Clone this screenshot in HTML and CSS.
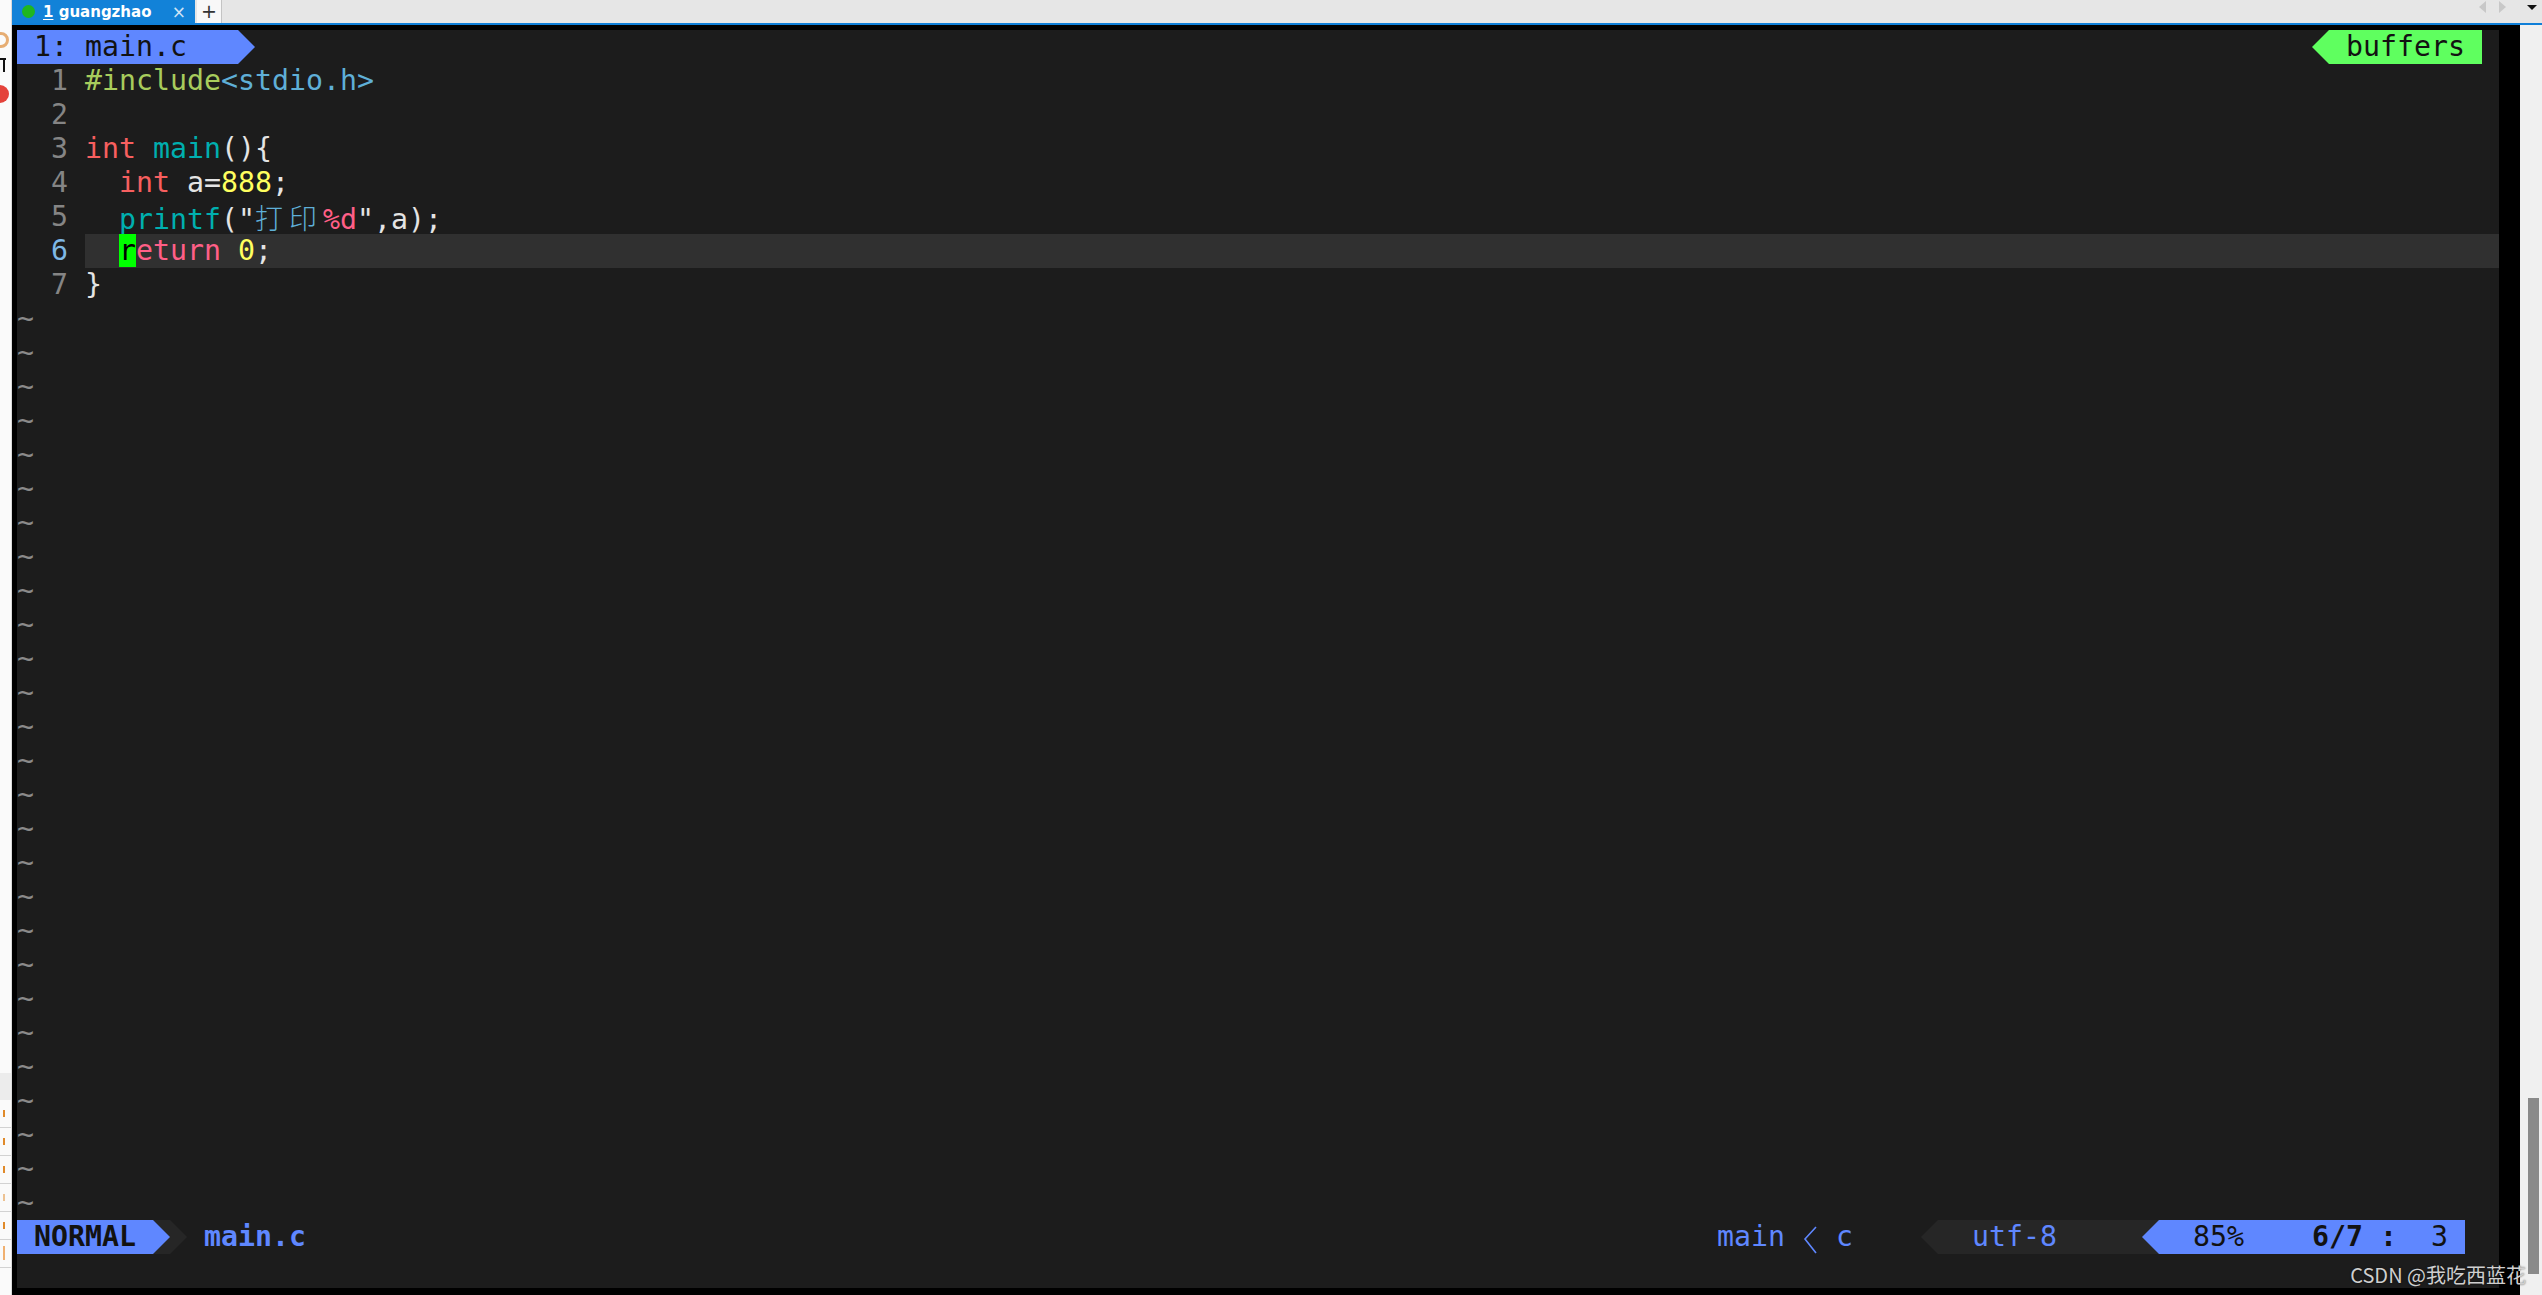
FILE: index.html
```html
<!DOCTYPE html>
<html lang="zh-CN">
<head>
<meta charset="UTF-8" />
<meta name="viewport" content="width=device-width, initial-scale=1.0"/>
<link rel="stylesheet" href="styles.css">
</head>
<body>

<div class="window">

  <!-- barra lateral de la app -->
  <aside class="side">
    <div class="side__find"></div>
    <div class="side__text"></div>
    <div class="side__logo"></div>
    <div class="side__spacer"></div>
    <div class="side__band"></div>
    <div class="side__cell"><i></i></div>
    <div class="side__cell"><i></i></div>
    <div class="side__cell"><i></i></div>
    <div class="side__cell"><i class="faint"></i></div>
    <div class="side__cell"><i></i></div>
    <div class="side__cell"><i class="long"></i></div>
    <div class="side__cell side__cell--last"></div>
  </aside>

  <div class="main">
    <div class="tabbar">
      <div class="tab">
        <span class="tab__dot"></span>
        <span class="tab__title"><u>1</u> guangzhao</span>
        <span class="tab__close">×</span>
      </div>
      <div class="tab-add">+</div>
      <div class="tabbar__nav">
        <span class="nav-prev"></span>
        <span class="nav-next"></span>
        <span class="nav-menu"></span>
      </div>
    </div>

    <div class="body">
      <div class="term">
        <div class="vim">

          <!-- tabline -->
          <div class="row">
            <span class="seg seg--tab"> 1: main.c</span>
            <span class="tri tri--r tri--blue"></span>
            <span class="fill"></span>
            <span class="tri tri--l tri--green"></span>
            <span class="seg seg--buffers"> buffers</span>
            <span class="seg seg--one"></span>
          </div>

          <!-- codigo -->
          <div class="row"><span class="nr">  1 </span><span class="code"><span class="c-pre">#include</span><span class="c-inc">&lt;stdio.h&gt;</span></span></div>
          <div class="row"><span class="nr">  2 </span><span class="code"></span></div>
          <div class="row"><span class="nr">  3 </span><span class="code"><span class="c-type">int</span> <span class="c-fn">main</span>(){</span></div>
          <div class="row"><span class="nr">  4 </span><span class="code">  <span class="c-type">int</span> a=<span class="c-num">888</span>;</span></div>
          <div class="row"><span class="nr">  5 </span><span class="code">  <span class="c-fn">printf</span>("<span class="c-str wide">打</span><span class="c-str wide">印</span><span class="c-fmt">%d</span>",a);</span></div>
          <div class="row"><span class="nr nr--cur">  6 </span><span class="code code--cur">  <span class="cursor">r</span><span class="c-kw">eturn</span> <span class="c-num">0</span>;</span></div>
          <div class="row"><span class="nr">  7 </span><span class="code">}</span></div>

          <!-- filas vacias -->
          <div class="row"><span class="tilde">~</span></div>
          <div class="row"><span class="tilde">~</span></div>
          <div class="row"><span class="tilde">~</span></div>
          <div class="row"><span class="tilde">~</span></div>
          <div class="row"><span class="tilde">~</span></div>
          <div class="row"><span class="tilde">~</span></div>
          <div class="row"><span class="tilde">~</span></div>
          <div class="row"><span class="tilde">~</span></div>
          <div class="row"><span class="tilde">~</span></div>
          <div class="row"><span class="tilde">~</span></div>
          <div class="row"><span class="tilde">~</span></div>
          <div class="row"><span class="tilde">~</span></div>
          <div class="row"><span class="tilde">~</span></div>
          <div class="row"><span class="tilde">~</span></div>
          <div class="row"><span class="tilde">~</span></div>
          <div class="row"><span class="tilde">~</span></div>
          <div class="row"><span class="tilde">~</span></div>
          <div class="row"><span class="tilde">~</span></div>
          <div class="row"><span class="tilde">~</span></div>
          <div class="row"><span class="tilde">~</span></div>
          <div class="row"><span class="tilde">~</span></div>
          <div class="row"><span class="tilde">~</span></div>
          <div class="row"><span class="tilde">~</span></div>
          <div class="row"><span class="tilde">~</span></div>
          <div class="row"><span class="tilde">~</span></div>
          <div class="row"><span class="tilde">~</span></div>
          <div class="row"><span class="tilde">~</span></div>

          <!-- statusline -->
          <div class="row">
            <span class="seg seg--mode"> NORMAL</span>
            <span class="cell cell--gray"><span class="tri tri--r tri--blue"></span></span>
            <span class="tri tri--r tri--gray"></span>
            <span class="seg seg--file"> main.c</span>
            <span class="fill"></span>
            <span class="seg seg--ft">main </span>
            <svg class="thin-sep" width="17" height="34" viewBox="0 0 17 34"><polyline points="14,7 3,19 14,33" fill="none" stroke="#5f87ff" stroke-width="1.6"/></svg>
            <span class="seg seg--ft2"> c</span>
            <span class="tri tri--l tri--gray"></span>
            <span class="seg seg--enc">  utf-8</span>
            <span class="cell cell--gray"><span class="tri tri--l tri--blue"></span></span>
            <span class="seg seg--pos">  85%    <b>6/7 :</b>  3</span>
            <span class="seg seg--end"></span>
          </div>

          <!-- linea de comandos -->
          <div class="row"></div>

        </div>
      </div>
      <div class="scroll"><div class="scroll__thumb"></div></div>
    </div>
  </div>
</div>

<div class="watermark">CSDN @我吃西蓝花</div>

</body>
</html>
```

FILE: styles.css
```css
:root {
  --vim-bg: #1c1c1c;
  --cur-line: #303030;
  --blue: #5f87ff;
  --green: #5fff5f;
  --seg-gray: #262626;
  --fg: #e4e4e4;
  --dim: #858585;
  --ink: #121212;
}

body {
  margin: 0;
  background: #f0f0f0;
  font-family: "DejaVu Sans", sans-serif;
}

.window {
  display: flex;
  width: 2542px;
  height: 1295px;
  overflow: hidden;
}

/* Barra lateral */
.side {
  width: 11px;
  border-right: 1px solid #dadada;
  background: #fafafa;
  display: flex;
  flex-direction: column;
  overflow: hidden;
}

.side__find {
  margin-top: 32px;
  margin-left: -7px;
  width: 10px;
  height: 10px;
  border: 3px solid #e6ad73;
  border-radius: 50%;
}

/* trozo de icono "T" */
.side__text {
  margin-top: 10px;
  height: 14px;
  width: 6px;
  border-top: 2px solid #111;
  box-sizing: border-box;
  background: linear-gradient(#111, #111) 3px 0 / 2px 100% no-repeat;
}

.side__logo {
  margin-top: 13px;
  margin-left: -9px;
  width: 18px;
  height: 18px;
  border-radius: 50%;
  background: #e4423a;
}

.side__spacer {
  flex: 1;
}

.side__band {
  height: 27px;
  background: #ececec;
}

.side__cell {
  height: 28px;
  box-sizing: border-box;
  border-bottom: 1px solid #d2d2d2;
}

.side__cell i {
  display: block;
  width: 2px;
  height: 7px;
  margin: 10px 0 0 3px;
  background: #e08a2a;
}

.side__cell i.faint {
  opacity: .5;
}

.side__cell i.long {
  height: 14px;
  margin-top: 6px;
  background: #f0b070;
}

.side__cell--last {
  height: 27px;
  border-bottom: none;
}

/* Pestañas */
.main {
  flex: 1;
  display: flex;
  flex-direction: column;
  min-width: 0;
}

.tabbar {
  height: 23px;
  border-bottom: 2px solid #0f7fd8;
  background: #e6e6e6;
  display: flex;
}

.tab {
  width: 183px;
  background: #1282d8;
  display: flex;
  align-items: center;
  color: #fff;
}

.tab__dot {
  width: 13px;
  height: 13px;
  border-radius: 50%;
  background: #1fb61f;
  margin-left: 10px;
}

.tab__title {
  margin-left: 8px;
  font-weight: bold;
  font-size: 15px;
}

.tab__title u {
  text-underline-offset: 2px;
}

.tab__close {
  margin-left: auto;
  margin-right: 9px;
  color: #cfe3f5;
  font-size: 17px;
}

.tab-add {
  width: 24px;
  margin-left: 2px;
  background: #f8f8f8;
  border-right: 1px solid #c4c4c4;
  text-align: center;
  font-size: 19px;
  line-height: 22px;
  color: #333;
}

.tabbar__nav {
  margin-left: auto;
  display: flex;
  align-items: flex-start;
}

.nav-prev {
  margin-top: 1px;
  border-right: 7px solid #c8c8c8;
  border-top: 6px solid transparent;
  border-bottom: 6px solid transparent;
}

.nav-next {
  margin-top: 1px;
  margin-left: 13px;
  border-left: 7px solid #c8c8c8;
  border-top: 6px solid transparent;
  border-bottom: 6px solid transparent;
}

.nav-menu {
  margin: 5px 5px 0 21px;
  border-top: 5px solid #111;
  border-left: 5px solid transparent;
  border-right: 5px solid transparent;
}

/* Terminal */
.body {
  flex: 1;
  display: flex;
  min-height: 0;
}

.term {
  flex: 1;
  background: #000;
  padding: 5px 21px 7px 5px;
}

.scroll {
  width: 22px;
  background: #f0f0f0;
  display: flex;
  flex-direction: column;
  justify-content: flex-end;
  box-sizing: border-box;
  padding: 0 3px 21px 8px;
}

.scroll__thumb {
  height: 176px;
  background: #8a8a8a;
}

.vim {
  background: var(--vim-bg);
  height: 1258px;
  font-family: "DejaVu Sans Mono", monospace;
  font-size: 28.24px;
  color: var(--fg);
}

.row {
  display: flex;
  height: 34px;
  line-height: 34px;
}

.row > span {
  white-space: pre;
}

.fill {
  flex: 1;
}

.nr {
  flex: 0 0 68px;
  color: var(--dim);
}

.nr--cur {
  color: #7fb8e6;
}

.code {
  flex: 1;
}

.code--cur {
  background: var(--cur-line);
}

.cursor {
  background: #00ff00;
  color: #000;
}

.tilde {
  color: #8a8a8a;
}

.c-pre { color: #a8cc5c; }
.c-inc { color: #5fafd7; }
.c-type { color: #f75f5f; }
.c-fn { color: #00afaf; }
.c-num { color: #ffff5f; }
.c-str { color: #5fafd7; }
.c-fmt { color: #ff5f87; }
.c-kw { color: #ff5f87; }

.wide {
  display: inline-block;
  width: 34px;
  font-family: "Noto Sans CJK SC", sans-serif;
  font-weight: 300;
  font-size: 28px;
}

/* Segmentos de tabline y statusline */
.seg {
  box-sizing: border-box;
}

.seg--tab {
  flex: 0 0 221px;
  background: var(--blue);
  color: var(--ink);
}

.seg--buffers {
  flex: 0 0 153px;
  background: var(--green);
  color: var(--ink);
}

.seg--one {
  flex: 0 0 17px;
}

.seg--mode {
  flex: 0 0 136px;
  background: var(--blue);
  color: var(--ink);
  font-weight: bold;
}

.seg--file {
  flex: 0 0 119px;
  color: var(--blue);
  font-weight: bold;
}

.seg--ft {
  flex: 0 0 85px;
  color: var(--blue);
}

.seg--ft2 {
  flex: 0 0 102px;
  color: var(--blue);
}

.thin-sep {
  flex: 0 0 17px;
}

.seg--enc {
  flex: 0 0 204px;
  background: var(--seg-gray);
  color: var(--blue);
}

.seg--pos {
  flex: 0 0 306px;
  background: var(--blue);
  color: var(--ink);
}

.seg--end {
  flex: 0 0 34px;
}

.cell {
  flex: 0 0 17px;
  display: flex;
}

.cell--gray {
  background: var(--seg-gray);
}

.tri {
  flex: 0 0 17px;
  width: 17px;
  height: 34px;
}

.tri--r {
  clip-path: polygon(0 0, 100% 50%, 0 100%);
}

.tri--l {
  clip-path: polygon(100% 0, 0 50%, 100% 100%);
}

.tri--blue { background: var(--blue); }
.tri--green { background: var(--green); }
.tri--gray { background: var(--seg-gray); }

/* Marca de agua */
.watermark {
  position: absolute;
  top: 1265px;
  right: 16px;
  font-family: "Noto Sans CJK SC", sans-serif;
  font-size: 20px;
  line-height: 20px;
  color: #cfcfcf;
  text-shadow: 0 0 2px rgba(0, 0, 0, .6);
}
```
